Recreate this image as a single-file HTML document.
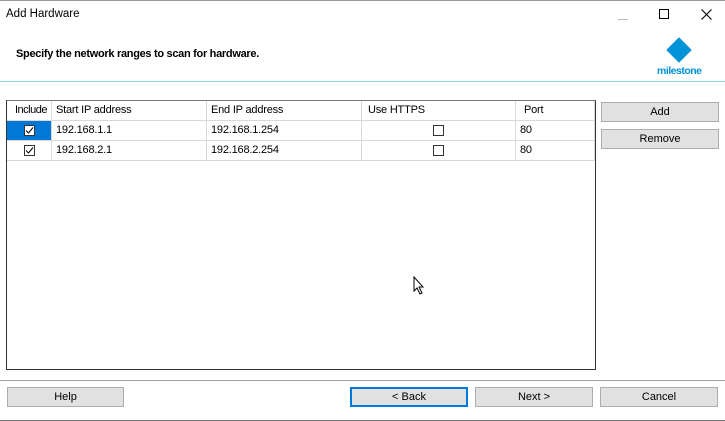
<!DOCTYPE html>
<html><head><style>
body{margin:0;width:725px;height:421px;position:relative;background:#fff;font-family:"Liberation Sans",sans-serif;font-size:11px;color:#000;overflow:hidden}
.a{position:absolute}
.btn{position:absolute;background:#e1e1e1;border:1px solid #adadad;box-sizing:border-box;text-align:center;line-height:18px;font-size:11px}
.cell{position:absolute;box-sizing:border-box;border-right:1px solid #d8d8d8;border-bottom:1px solid #d8d8d8;line-height:19px;padding-left:4px;white-space:nowrap;letter-spacing:-0.2px}
.cb{position:absolute;width:11px;height:11px;border:1px solid #333;box-sizing:border-box;background:#fff}
</style></head><body>
<div class="a" style="left:0;top:0;width:725px;height:1px;background:#999"></div>
<div class="a" style="left:6px;top:8px;font-size:11.5px">Add Hardware</div>
<div class="a" style="left:618px;top:19px;width:10px;height:1px;background:#bbb"></div>
<div class="a" style="left:659px;top:9px;width:10px;height:10px;border:1px solid #000;box-sizing:border-box"></div>
<svg class="a" style="left:701px;top:9px" width="11" height="11"><path d="M0.5 0.5L10.5 10.5M10.5 0.5L0.5 10.5" stroke="#000" stroke-width="1.1"/></svg>
<div class="a" style="left:16px;top:48px;font-weight:bold;font-size:11px;letter-spacing:-0.3px">Specify the network ranges to scan for hardware.</div>
<div class="a" style="left:670px;top:41px;width:18px;height:18px;background:#0093d8;transform:rotate(45deg)"></div>
<div class="a" style="left:657px;top:65px;color:#0093d8;font-size:10.5px;font-weight:bold;letter-spacing:-0.5px">milestone</div>
<div class="a" style="left:0;top:81px;width:725px;height:1px;background:#8fdcea"></div>
<div class="a" style="left:6px;top:100px;width:590px;height:270px;border:1px solid #333;border-top-color:#777;box-sizing:border-box;background:#fff"></div>
<div class="cell" style="left:7px;top:101px;width:45px;height:20px;padding-left:8px;letter-spacing:-0.5px">Include</div>
<div class="cell" style="left:52px;top:101px;width:155px;height:20px">Start IP address</div>
<div class="cell" style="left:207px;top:101px;width:155px;height:20px">End IP address</div>
<div class="cell" style="left:362px;top:101px;width:154px;height:20px;padding-left:6px">Use HTTPS</div>
<div class="cell" style="left:516px;top:101px;width:79px;height:20px;padding-left:8px">Port</div>
<div class="cell" style="left:7px;top:121px;width:45px;height:20px;background:#0078d7"></div>
<div class="cb" style="left:24px;top:125px"></div>
<svg class="a" style="left:24px;top:125px" width="11" height="11"><path d="M2 5.5L4.5 8L9 2.5" fill="none" stroke="#000" stroke-width="1"/></svg>
<div class="cell" style="left:52px;top:121px;width:155px;height:20px">192.168.1.1</div>
<div class="cell" style="left:207px;top:121px;width:155px;height:20px">192.168.1.254</div>
<div class="cell" style="left:362px;top:121px;width:154px;height:20px"></div>
<div class="cb" style="left:433px;top:125px"></div>
<div class="cell" style="left:516px;top:121px;width:79px;height:20px">80</div>
<div class="cell" style="left:7px;top:141px;width:45px;height:20px"></div>
<div class="cb" style="left:24px;top:145px"></div>
<svg class="a" style="left:24px;top:145px" width="11" height="11"><path d="M2 5.5L4.5 8L9 2.5" fill="none" stroke="#000" stroke-width="1"/></svg>
<div class="cell" style="left:52px;top:141px;width:155px;height:20px">192.168.2.1</div>
<div class="cell" style="left:207px;top:141px;width:155px;height:20px">192.168.2.254</div>
<div class="cell" style="left:362px;top:141px;width:154px;height:20px"></div>
<div class="cb" style="left:433px;top:145px"></div>
<div class="cell" style="left:516px;top:141px;width:79px;height:20px">80</div>
<div class="btn" style="left:601px;top:102px;width:118px;height:20px">Add</div>
<div class="btn" style="left:601px;top:129px;width:118px;height:20px">Remove</div>
<svg class="a" style="left:413px;top:276px" width="12" height="19"><path d="M1 1 L1 15 L4 12 L7 18 L9 17 L6 11 L10 11 Z" fill="#fff" stroke="#000" stroke-width="1"/></svg>
<div class="a" style="left:0;top:380px;width:725px;height:1px;background:#a0a0a0"></div>
<div class="btn" style="left:7px;top:387px;width:117px;height:20px">Help</div>
<div class="btn" style="left:350px;top:387px;width:118px;height:20px;border:2px solid #0078d7;line-height:16px">&lt; Back</div>
<div class="btn" style="left:475px;top:387px;width:118px;height:20px">Next &gt;</div>
<div class="btn" style="left:600px;top:387px;width:118px;height:20px">Cancel</div>
<div class="a" style="left:0;top:420px;width:725px;height:1px;background:#777"></div>
</body></html>
